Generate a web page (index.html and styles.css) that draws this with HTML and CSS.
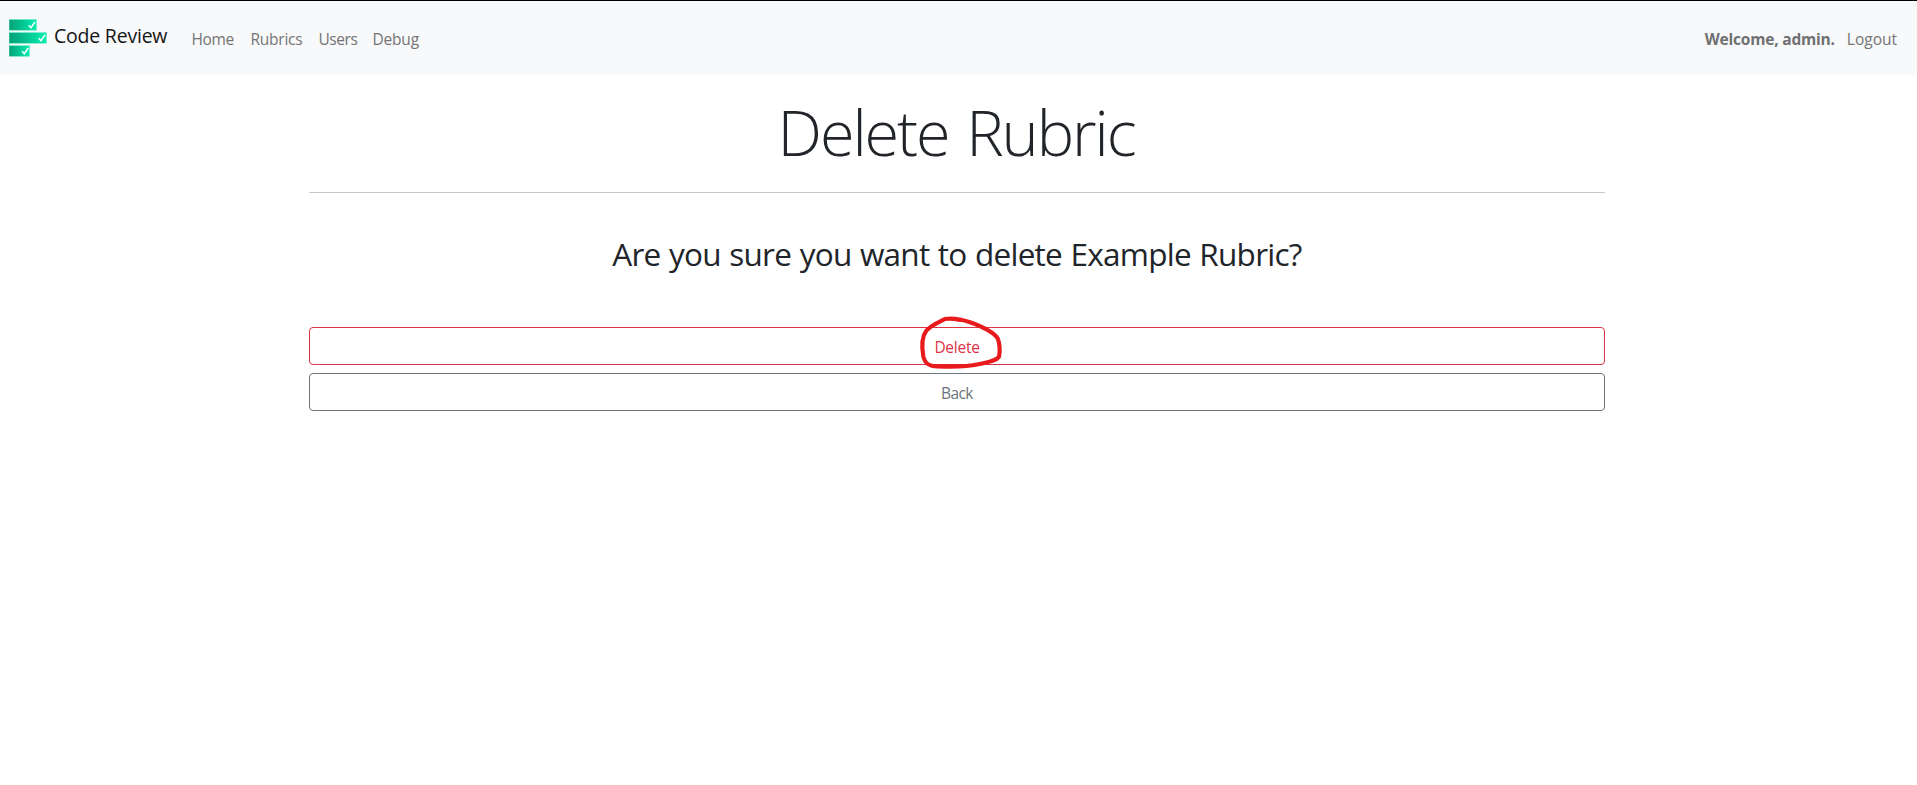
FILE: index.html
```html
<!DOCTYPE html>
<html lang="en">
<head>
<meta charset="utf-8">
<title>Delete Rubric</title>
<link rel="stylesheet" href="styles.css">
</head>
<body>
<nav class="navbar">
  <a class="brand">
    <svg class="logo" width="38" height="38" viewBox="0 0 38 38">
      <defs><linearGradient id="bar" x1="0" x2="1" y1="0" y2="0"><stop offset="0" stop-color="#05a077"/><stop offset="1" stop-color="#04eeb0"/></linearGradient></defs>
      <g stroke="#8ff0d4" stroke-width=".6">
        <rect x="0" y=".3" width="27.7" height="11" fill="url(#bar)"/>
        <rect x="0" y="13.4" width="37.7" height="11" fill="url(#bar)"/>
        <rect x="0" y="26.5" width="20.7" height="11" fill="url(#bar)"/>
      </g>
      <path d="M19.7 6.3l2.3 2.4 4-5.8M29.7 19.3l2.3 2.4 4-5.8M13 32.3l2.3 2.4 4-5.8" fill="none" stroke="#fff" stroke-width="1.5"/>
    </svg>
    <span class="brand-name">Code Review</span>
  </a>
  <div class="links">
    <a class="link home">Home</a>
    <a class="link rubrics">Rubrics</a>
    <a class="link users">Users</a>
    <a class="link debug">Debug</a>
  </div>
  <div class="account">
    <strong class="welcome">Welcome, admin.</strong>
    <a class="link">Logout</a>
  </div>
</nav>
<main class="container">
  <h1 class="title">Delete Rubric</h1>
  <hr class="rule">
  <h2 class="question">Are you sure you want to delete Example Rubric?</h2>
  <div class="actions">
    <button class="btn danger">Delete
      <svg class="ring" width="120" height="110" viewBox="0 0 360 330">
        <path d="M180 30C166 27 149 25 135 27C118 36 96 43 79 62C64 81 65 110 70 139C75 162 88 169 112 169C155 171 195 172 235 163C262 156 287 154 297 140C300 124 299 101 293 85C281 68 244 49 210 37C184 28 158 23 135 27" fill="none" stroke="#e81a1c" stroke-width="12.5" stroke-linecap="round" stroke-linejoin="round"/>
      </svg>
    </button>
    <button class="btn secondary">Back</button>
  </div>
</main>
</body>
</html>
```

FILE: styles.css
```css
* { box-sizing: border-box; }
body {
  margin: 0;
  background: #fff;
  color: #212529;
  font-family: "Open Sans", "Noto Sans", sans-serif;
  font-size: 15.5px;
  line-height: 24px;
}
.navbar {
  display: flex;
  align-items: flex-start;
  height: 75px;
  padding: 18px 20px 0 9px;
  border-top: 1px solid #000;
  background: #f8f9fa;
}
.brand { display: flex; color: #151515; }
.logo { display: block; }
.brand-name {
  margin: 2px 0 0 7px;
  width: 137.5px;
  font-size: 19.5px;
  line-height: 30px;
  letter-spacing: -.22px;
  white-space: nowrap;
}
.links { display: flex; padding-top: 8px; }
.link { color: #737475; }
.home { width: 59px; letter-spacing: -.35px; }
.rubrics { width: 68px; letter-spacing: -.25px; }
.users { width: 54px; letter-spacing: -.45px; }
.debug { letter-spacing: -.2px; }
.account { display: flex; gap: 12px; margin-left: auto; padding-top: 8px; }
.welcome { color: #6f7071; letter-spacing: -.2px; }
.container { width: 1296px; margin: 0 0 0 309px; padding-top: 18px; text-align: center; }
.title {
  margin: 0;
  padding-right: 2px;
  font-size: 63px;
  font-weight: 300;
  line-height: 77px;
  letter-spacing: -2.1px;
  word-spacing: 3.5px;
}
.rule { height: 1px; margin: 22px 0 0; border: 0; background: #c7c8c9; }
.question {
  margin: 42px 0 54px;
  font-size: 31.5px;
  font-weight: 400;
  line-height: 38px;
  letter-spacing: -.74px;
  word-spacing: 1px;
}
.actions { display: grid; gap: 8px; }
.btn {
  position: relative;
  height: 38px;
  padding: 2px 0 0;
  border: 1px solid;
  border-radius: 4px;
  background: transparent;
  font: inherit;
}
.danger { color: #dc3545; letter-spacing: -.26px; }
.secondary { color: #6c757d; letter-spacing: -.6px; }
.ring { position: absolute; left: 589.5px; top: -18px; }
```
